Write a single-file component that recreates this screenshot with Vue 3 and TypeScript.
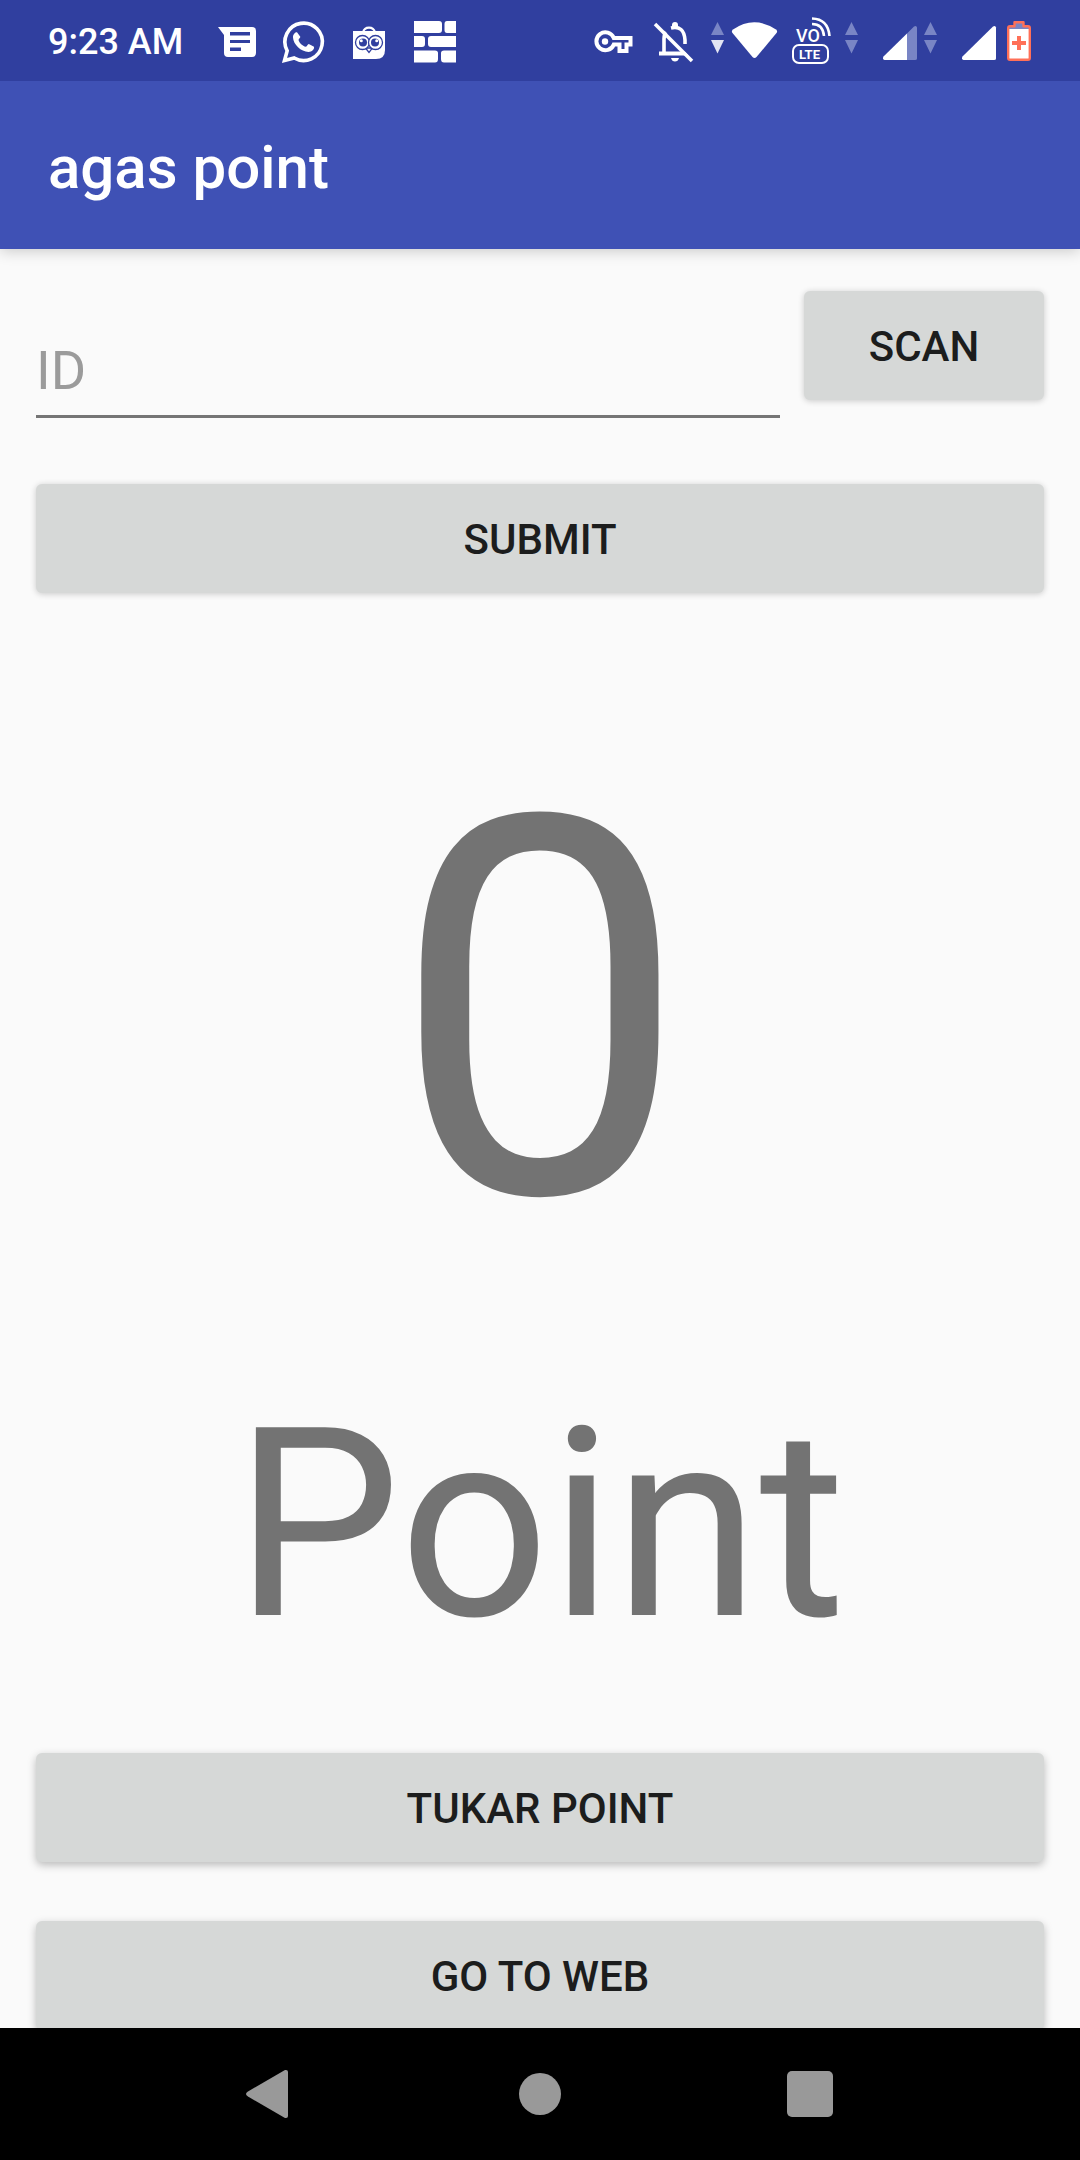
<script setup lang="ts">
import { ref } from 'vue'

const memberId = ref('')
const points = ref(0)
</script>

<template>
  <div class="screen">
    <header>
      <div class="status-bar">
        <div class="group left">
          <time class="clock">9:23 AM</time>
          <svg width="48" height="48" viewBox="0 0 48 48" aria-hidden="true">
            <path fill="#fff" d="M5 10H39Q43 10 43 14V36Q43 40 39 40H15Q11 40 11 36V18Z" />
            <path fill="#303f9f" d="M17 15H37V18.500H17ZM17 23H37V26H17ZM17 30.500H28V34H17Z" />
          </svg>
          <svg width="48" height="48" viewBox="0 0 48 48" aria-hidden="true">
            <path fill="none" stroke="#fff" stroke-width="3.600" d="M5.500 43.500L8.200 33.800A18.700 18.700 0 1 1 15.200 41Z" />
            <path fill="#fff" d="M18 15.200C16.500 15 13.800 17 14 20.500C14.300 27.500 22 34.700 29.500 35C33 35 35.500 32.500 35 29.800L29.800 27C28.500 27 28.300 29.500 26.800 29.800C23.500 29 20.300 26 19.500 23C19.800 21.700 21.500 21 21.300 19.800Z" />
          </svg>
          <svg width="48" height="48" viewBox="0 0 48 48" aria-hidden="true">
            <path fill="none" stroke="#fff" stroke-width="2.200" d="M18 15.500A6.200 6.500 0 0 1 30 15.500" />
            <path fill="#fff" d="M8 14H40V33Q40 42 31 42H8Z" />
            <path fill="#303f9f" d="M19.500 14Q24 11 28.500 14Z" />
            <g fill="#fff" stroke="#303f9f" stroke-width="1.300">
              <path d="M20.500 31L24 35.500L27.500 31Z" />
              <circle cx="17.500" cy="25.500" r="7" />
              <circle cx="30.500" cy="25.500" r="7" />
            </g>
            <g fill="#303f9f">
              <circle cx="18" cy="25.500" r="4" />
              <circle cx="30" cy="25.500" r="4" />
            </g>
            <g fill="#fff">
              <circle cx="16.300" cy="23.800" r="1.500" />
              <circle cx="31.700" cy="23.800" r="1.500" />
            </g>
          </svg>
          <svg width="48" height="48" viewBox="0 0 48 48" aria-hidden="true">
            <path fill="#fff" d="M3 4H28Q31 4 31 7V13Q31 16 28 16H3ZM36 4H45V16H36Q33.500 16 33.500 13V7Q33.500 4 36 4ZM3 19H11Q14 19 14 22V27Q14 30 11 30H3ZM20 19H45V30H20Q17 30 17 27V22Q17 19 20 19ZM3 33.500H24Q27 33.500 27 36V42Q27 45.500 24 45.500H3ZM33 33.500H45V45.500H33Q30 45.500 30 42V36Q30 33.500 33 33.500Z" />
          </svg>
        </div>
        <div class="group right">
          <svg width="48" height="48" viewBox="0 0 48 48" aria-hidden="true">
            <path fill="none" stroke="#fff" stroke-width="4" d="M23.800 21H40.500V27.500H36.500V34H29.500V27.500H23.800A9 9 0 1 1 23.800 21Z" />
            <circle cx="15" cy="24.500" r="3.200" fill="#fff" />
          </svg>
          <svg width="48" height="48" viewBox="0 0 48 48" aria-hidden="true">
            <path fill="none" stroke="#fff" stroke-width="3.600" d="M14 37V22Q14 17 17 13.500M21 11Q34 8 35 23V27" />
            <path fill="#fff" d="M22 11V8Q22 5 25 5Q28 5 28 8V11ZM9 34.500H36L39 38.500H9ZM21 41H29Q28 44.500 25 44.500Q22 44.500 21 41Z" />
            <path fill="none" stroke="#303f9f" stroke-width="4" d="M8 4L44 41" />
            <path fill="none" stroke="#fff" stroke-width="3.600" d="M5 7L42 44" />
          </svg>
          <svg width="70" height="48" viewBox="0 0 70 48" aria-hidden="true">
            <path fill="#7985c5" d="M7.500 5L14 18H1Z" />
            <path fill="#e3e5f3" d="M1 23H14L7.500 36.500Z" />
            <path fill="#fff" d="M23 12.500Q44 -2 66 12.500Q68 14 66.500 16L46.500 40Q44.500 42 42.500 40L22.500 16Q21 14 23 12.500Z" />
          </svg>
          <svg width="68" height="48" viewBox="0 0 68 48" aria-hidden="true">
            <text class="vo" x="4" y="25">VO</text>
            <path fill="none" stroke="#fff" stroke-width="2.600" d="M20 1.500Q36 2 37.500 19M20 7Q31 7 32 19" />
            <rect x="1" y="28" width="35" height="18" rx="6" fill="none" stroke="#fff" stroke-width="2" />
            <text class="lte" x="7" y="42">LTE</text>
            <path fill="#7985c5" d="M59.500 5L66 18H53ZM53 23H66L59.500 36.500Z" />
          </svg>
          <svg width="66" height="48" viewBox="0 0 66 48" aria-hidden="true">
            <path fill="#fff" d="M35 16.500V43H12.500Q10 42 11.500 39.500Z" />
            <path fill="#7985c5" d="M35 16.500L42 9.500Q44.500 8 45 10.500V41.500Q45 43 43 43H35ZM58.500 5L65 18H52ZM52 23H65L58.500 36.500Z" />
          </svg>
          <svg width="82" height="48" viewBox="0 0 82 48" aria-hidden="true">
            <path fill="#fff" d="M12.500 39.500L43 9.500Q45.500 8 46 10.500V41.500Q46 43 44 43H13.500Q11 42 12.500 39.500Z" />
            <path fill="#7985c5" d="M64 5H74V9.500H80V12H58V9.500H64Z" />
            <path fill="#fff" d="M59 12H79V43H59Z" />
            <path fill="none" stroke="#ff7058" stroke-width="2.400" stroke-linejoin="round" d="M64.500 5.200H73.500V9.200H78Q79.800 9.200 79.800 11V41Q79.800 42.800 78 42.800H60Q58.200 42.800 58.200 41V11Q58.200 9.200 60 9.200H64.500Z" />
            <path fill="none" stroke="#ff7058" stroke-width="4" d="M69 19V33M62 26H76" />
          </svg>
        </div>
      </div>
      <div class="app-bar"><h1>agas point</h1></div>
    </header>

    <main>
      <form class="form" @submit.prevent>
        <div class="id-row">
          <input v-model="memberId" class="id-field" type="text" placeholder="ID" aria-label="ID" />
          <button class="btn scan" type="button">SCAN</button>
        </div>
        <button class="btn" type="submit">SUBMIT</button>
      </form>
      <section class="balance">
        <p class="amount">{{ points }}</p>
        <p class="unit">Point</p>
      </section>
      <div class="actions">
        <button class="btn raised" type="button">TUKAR POINT</button>
        <button class="btn raised" type="button">GO TO WEB</button>
      </div>
    </main>

    <nav class="nav-bar" aria-label="System">
      <button type="button" aria-label="Back">
        <svg width="48" height="48" viewBox="0 0 48 48"><path fill="#999" d="M39 0H40Q42 0 42 2V46Q42 48 40 48H39L2 26.500Q-2 24 2 21.500Z" /></svg>
      </button>
      <button type="button" aria-label="Home">
        <svg width="48" height="48" viewBox="0 0 48 48"><circle cx="24" cy="24" r="21" fill="#999" /></svg>
      </button>
      <button type="button" aria-label="Recent apps">
        <svg width="48" height="48" viewBox="0 0 48 48"><rect x="1" y="1" width="46" height="46" rx="5" fill="#999" /></svg>
      </button>
    </nav>
  </div>
</template>

<style>
body {
  margin: 0;
}
</style>

<style scoped>
.screen {
  display: flex;
  flex-direction: column;
  height: 100vh;
  background: #fafafa;
  font-family: Roboto, "Liberation Sans", sans-serif;
}

header {
  position: relative;
  flex: none;
  box-shadow: 0 2px 14px rgba(0, 0, 0, 0.2);
}

.status-bar {
  display: flex;
  justify-content: space-between;
  align-items: center;
  height: 81px;
  padding: 0 48px;
  background: #303f9f;
  color: #fff;
}

.group {
  display: flex;
  align-items: center;
}

.left {
  gap: 18px;
}

.right {
  gap: 12px;
}

.clock {
  width: 147px;
  padding-top: 2px;
  font-size: 36px;
  font-weight: 500;
  line-height: 42px;
  white-space: nowrap;
}

svg {
  display: block;
  flex: none;
  overflow: visible;
}

.vo,
.lte {
  fill: #fff;
  font-family: Roboto, sans-serif;
}

.vo {
  font-size: 18px;
  font-weight: 500;
}

.lte {
  font-size: 13px;
  font-weight: 700;
}

.app-bar {
  display: flex;
  align-items: center;
  box-sizing: border-box;
  height: 168px;
  padding: 6px 48px 0;
  background: #3f51b5;
}

h1 {
  margin: 0;
  color: #fff;
  font-size: 60px;
  font-weight: 500;
  line-height: 70px;
}

main {
  flex: 1;
  min-height: 0;
  padding: 42px 36px 0;
  overflow-y: auto;
  scrollbar-width: none;
}

.form,
.actions {
  display: flex;
  flex-direction: column;
}

.form {
  gap: 66px;
}

.actions {
  gap: 59px;
}

.id-row {
  display: flex;
  align-items: flex-start;
  gap: 24px;
}

.id-field {
  flex: 1;
  min-width: 0;
  box-sizing: border-box;
  height: 127px;
  padding: 46px 0 12px;
  border: 0;
  border-bottom: 3px solid #757575;
  outline: 0;
  background: transparent;
  color: #212121;
  font: 400 54px/64px Roboto, sans-serif;
}

.id-field::placeholder {
  color: #9b9b9b;
  opacity: 1;
}

.btn {
  flex: none;
  width: 100%;
  height: 109px;
  padding: 2px 0 0;
  border: 0;
  border-radius: 6px;
  background: #d6d8d7;
  box-shadow: 0 1px 6px rgba(0, 0, 0, 0.2);
  color: #1c1d1d;
  font: 500 42px/50px Roboto, sans-serif;
}

.scan {
  width: 240px;
}

.raised {
  box-shadow: 0 3px 8px rgba(0, 0, 0, 0.26);
}

.balance {
  padding: 109px 0 73px;
  color: #737373;
  text-align: center;
}

.balance p {
  margin: 0;
}

.amount {
  font-size: 528px;
  line-height: 620px;
}

.balance .unit {
  margin-top: 48px;
  font-size: 264px;
  line-height: 310px;
}

.nav-bar {
  position: relative;
  display: flex;
  flex: none;
  justify-content: center;
  gap: 126px;
  height: 132px;
  background: #000;
}

.nav-bar button {
  display: flex;
  align-items: center;
  justify-content: center;
  width: 144px;
  padding: 0;
  border: 0;
  background: transparent;
}
</style>
